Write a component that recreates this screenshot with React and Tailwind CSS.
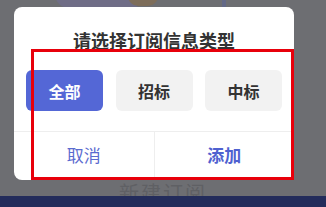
import React from 'react';

const font = { fontFamily: '"Noto Sans CJK SC", "Noto Sans", sans-serif' };

const TypeButton = ({ label, active }) => (
  <button
    className={`h-[41px] w-[77px] rounded-[6px] text-[16px] leading-[20px] font-bold ${
      active ? 'bg-[#5467d6] text-white' : 'bg-[#f2f2f2] text-[#333]'
    }`}
  >
    {label}
  </button>
);

const App = () => {
  return (
    <div className="relative w-[326px] h-[207px] overflow-hidden bg-[#6d6e72]" style={font}>
      {/* faint page content behind the overlay */}
      <div className="absolute left-[55px] -top-[20px] w-[90px] h-[28px] rounded-full bg-[#6f6d86]"></div>
      <div className="absolute left-[128px] -top-[14px] w-[30px] h-[20px] rounded-full bg-[#7d6d5a]"></div>
      <div className="absolute left-[222px] top-0 w-[4px] h-[7px] bg-[#626886]"></div>

      <div className="pt-[7px] pl-[14px]">
        <div className="relative w-[280px] h-[173px] rounded-[8px] bg-white flex flex-col">
          <div className="pt-[22px] text-center text-[18px] leading-[22px] font-bold text-[#333]">
            请选择订阅信息类型
          </div>
          <div className="mt-[19px] px-[12px] flex justify-between">
            <TypeButton label="全部" active />
            <TypeButton label="招标" />
            <TypeButton label="中标" />
          </div>
          <div className="mt-[20px] flex flex-1 border-t border-[#eeeeee]">
            <button className="flex-1 pb-[3px] text-[17px] leading-[22px] text-[#5b6bcf] border-r border-[#eeeeee]">取消</button>
            <button className="flex-1 pb-[3px] text-[17px] leading-[22px] font-bold text-[#4f61d0]">添加</button>
          </div>
        </div>
      </div>

      <div className="h-[16px] overflow-hidden flex justify-center">
        <span className="text-[20px] leading-[26px] text-[#5f6064] tracking-[2px]">新建订阅</span>
      </div>
      <div className="h-[11px] bg-[#232c5b]"></div>

      {/* annotation frame */}
      <div className="absolute left-[31px] top-[49px] w-[263px] h-[131px] border-[3px] border-[#e8000b]"></div>
    </div>
  );
};

export default App;
